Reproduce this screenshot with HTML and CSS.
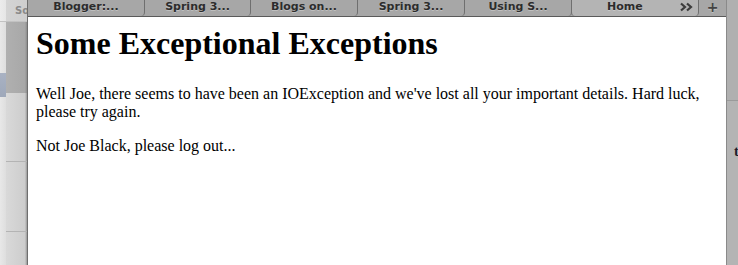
FILE: index.html
```html
<!DOCTYPE html>
<html>
<head>
<meta charset="utf-8">
<link rel="stylesheet" href="styles.css">
</head>
<body>
<div class="screen">
  <div class="behind">
    <div class="behind-head"><span class="behind-title">So</span></div>
    <div class="behind-body">
      <div class="behind-col c-left">
        <div class="sel-gap"></div>
        <div class="behind-sel"></div>
      </div>
      <div class="behind-col c-right">
        <div class="behind-block"></div>
        <div class="behind-row r1"></div>
        <div class="behind-row r2"></div>
        <div class="behind-row r3"></div>
      </div>
    </div>
  </div>
  <div class="window">
    <div class="tabbar">
      <div class="tab t1">Blogger:...</div>
      <div class="tab t2">Spring 3...</div>
      <div class="tab t3">Blogs on...</div>
      <div class="tab t4">Spring 3...</div>
      <div class="tab t5">Using S...</div>
      <div class="tab t6 active"><span class="tab-label">Home</span><svg class="more" width="14" height="10" viewBox="0 0 14 10"><path d="M1 1.5 L5 5 L1 8.5 M7 1.5 L11 5 L7 8.5" fill="none" stroke="#3c3c3c" stroke-width="2.2" stroke-linejoin="miter"/></svg></div>
      <div class="newtab">+</div>
    </div>
    <div class="page">
      <h1>Some Exceptional Exceptions</h1>
      <p>Well Joe, there seems to have been an IOException and we've lost all your important details. Hard luck, please try again.</p>
      <p>Not Joe Black, please log out...</p>
    </div>
  </div>
  <div class="side">
    <div class="side-top"></div>
    <div class="side-bottom"><span class="side-glyph">t</span></div>
  </div>
</div>
</body>
</html>
```
FILE: styles.css
```css
html, body {
  margin: 0;
  padding: 0;
  width: 738px;
  height: 265px;
  overflow: hidden;
  background: #c8c8c8;
}
.screen {
  display: flex;
  width: 738px;
  height: 265px;
}
.behind {
  width: 27px;
  flex: none;
  display: flex;
  flex-direction: column;
  background: #dcdcdc;
}
.behind-head {
  height: 22px;
  flex: none;
  display: flex;
  align-items: center;
  padding-left: 15px;
  box-sizing: border-box;
  background: linear-gradient(to right, #ececec 0, #e6e6e6 6px, #d4d4d4 6px, #cecece 27px);
  border-bottom: 1px solid #c2c2c2;
}
.behind-title {
  font-family: "DejaVu Sans", sans-serif;
  font-weight: bold;
  font-size: 10px;
  color: #8a8a8a;
}
.behind-body {
  flex: 1;
  display: flex;
}
.behind-col {
  display: flex;
  flex-direction: column;
}
.c-left {
  width: 6px;
  background: linear-gradient(to right, #e8e8e8, #dedede);
}
.sel-gap { height: 51px; }
.behind-sel {
  height: 24px;
  background: linear-gradient(to bottom, #a9b2c3, #9ea8ba);
}
.c-right {
  width: 21px;
  background: linear-gradient(to right, #d9d9d9, #cdcdcd 90%, #9a9a9a);
}
.behind-block {
  height: 71px;
  background: linear-gradient(to right, #b0b0b0, #a8a8a8 90%, #8c8c8c);
}
.behind-row {
  border-bottom: 1px solid #b4b4b4;
}
.r1 { height: 68px; }
.r2 { height: 69px; }
.r3 { flex: 1; border-bottom: none; }

.window {
  width: 699px;
  flex: none;
  display: flex;
  flex-direction: column;
  border-left: 1px solid #6e6e6e;
  box-sizing: border-box;
  background: #fff;
}
.tabbar {
  height: 17px;
  flex: none;
  display: flex;
  background: #a7a7a7;
  border-bottom: 1px solid #5a5a5a;
  box-sizing: border-box;
  font-family: "DejaVu Sans", sans-serif;
  font-weight: bold;
  font-size: 11px;
  color: #2c2c2c;
  text-shadow: 0 1px 0 rgba(255,255,255,0.3);
}
.tab {
  flex: none;
  display: flex;
  align-items: center;
  justify-content: center;
  height: 16px;
  line-height: 16px;
  padding-bottom: 2px;
  box-sizing: border-box;
  border-right: 1px solid #6f6f6f;
  border-bottom-right-radius: 4px;
  white-space: nowrap;
}
.t1 { width: 117px; }
.t2 { width: 106px; }
.t3 { width: 107px; }
.t4 { width: 107px; }
.t5 { width: 107px; }
.t6 { width: 128px; justify-content: flex-start; padding-left: 35px; padding-right: 4px; }
.tab.active {
  background: #b4b4b4;
  border-left: 1px solid #6f6f6f;
  border-bottom-left-radius: 4px;
  margin-left: -1px;
}
.tab-label { flex: 1; }
.more {
  flex: none;
  display: block;
}
.newtab {
  flex: 1;
  display: flex;
  align-items: center;
  justify-content: center;
  padding-bottom: 2px;
  font-size: 14px;
  color: #444;
}
.page {
  flex: 1;
  padding: 0 8px;
  font-family: "Liberation Serif", "Times New Roman", serif;
  color: #000;
}
.page h1 {
  font-size: 32px;
  font-weight: bold;
  margin: 8px 0 23px;
  line-height: 37px;
}
.page p {
  font-size: 16px;
  line-height: 18px;
  margin: 0 0 16px;
}
.side {
  flex: 1;
  display: flex;
  flex-direction: column;
  background: #b4b4b4;
  border-left: 1px solid #8a8a8a;
}
.side-top {
  height: 100px;
  border-bottom: 1px solid #9a9a9a;
  background: #b0b0b0;
}
.side-bottom {
  flex: 1;
  padding-top: 43px;
  padding-left: 7px;
  font-family: "Liberation Serif", serif;
  font-weight: bold;
  font-size: 14px;
  color: #1a1a2a;
  line-height: 16px;
  overflow: hidden;
}
```
